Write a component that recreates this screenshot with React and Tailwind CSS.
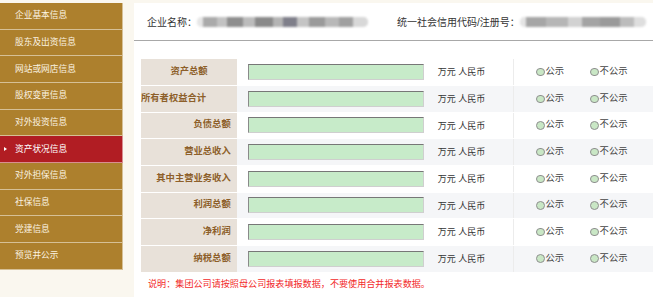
const navItems = [
  '企业基本信息',
  '股东及出资信息',
  '网站或网店信息',
  '股权变更信息',
  '对外投资信息',
  '资产状况信息',
  '对外担保信息',
  '社保信息',
  '党建信息',
  '预览并公示',
];

const rows = [
  { label: '资产总额', align: 'justify-center' },
  { label: '所有者权益合计', align: 'justify-start' },
  { label: '负债总额', align: 'justify-end pr-[6.3px]' },
  { label: '营业总收入', align: 'justify-end pr-[6.3px]' },
  { label: '其中主营业务收入', align: 'justify-end pr-[6.3px]' },
  { label: '利润总额', align: 'justify-end pr-[6.3px]' },
  { label: '净利润', align: 'justify-end pr-[6.3px]' },
  { label: '纳税总额', align: 'justify-end pr-[6.3px]' },
];

const Blurred = ({ widths }) => (
  <div className="flex items-center h-[10px] rounded-full overflow-hidden blur-[1.2px] bg-[#d4d4d4]">
    {widths.map(([w, c], i) => (
      <span key={i} className="h-full" style={{ width: w, background: c }} />
    ))}
  </div>
);

const Radio = ({ label, className = '' }) => (
  <span className={`flex items-center ${className}`}>
    <span className="shrink-0 w-[8.5px] h-[8.5px] rounded-full border border-[#8f8f8f] bg-[#c9e7c5] mr-[1px]" />
    <span>{label}</span>
  </span>
);

const App = () => {
  return (
    <div className="w-[653px] h-[297px] bg-[#faf7ef] flex pt-[3px] overflow-hidden font-['Liberation_Sans','Noto_Sans_CJK_SC',sans-serif]">
      <nav className="w-[123px] shrink-0 flex flex-col self-start">
        {navItems.map((item, i) => {
          const active = i === 5;
          return (
            <div
              key={item}
              className={`relative h-[26.67px] flex items-center pl-[15px] text-[8.7px] border-b border-r border-white/50 ${
                active ? 'bg-[#b11d23] text-white' : 'bg-[#ad802d] text-[#fbf3e2]'
              }`}
            >
              {active && (
                <span className="absolute left-[4px] top-1/2 -translate-y-1/2 w-0 h-0 border-y-[2.5px] border-y-transparent border-l-[3.5px] border-l-white" />
              )}
              {item}
            </div>
          );
        })}
      </nav>

      <main className="ml-[11px] flex-1 bg-white flex flex-col">
        <header className="h-[38px] border-b border-[#a8a8a8] flex items-center text-[10px] text-[#333] pt-[1px]">
          <div className="flex items-center pl-[13px]">
            <span>企业名称：</span>
            <div className="w-[171px]">
              <Blurred
                widths={[
                  [6, '#e6e6e6'], [14, '#aaaaaa'], [10, '#c2c2c2'], [16, '#8e8e8e'], [12, '#bcbcbc'],
                  [18, '#8a8a8a'], [10, '#b4b4b4'], [14, '#7f7f8a'], [12, '#c4c4c4'], [16, '#9a9a9a'],
                  [14, '#b8b8b8'], [14, '#a0a0a0'], [15, '#d8d8d8'],
                ]}
              />
            </div>
          </div>
          <div className="flex items-center ml-[29px]">
            <span>统一社会信用代码/注册号：</span>
            <div className="w-[126px]">
              <Blurred
                widths={[
                  [6, '#e4e4e4'], [20, '#a6a6a6'], [22, '#b6b6b6'], [14, '#d2d2d2'], [18, '#a4a4a4'],
                  [20, '#9a9a9a'], [14, '#bcbcbc'], [12, '#dedede'],
                ]}
              />
            </div>
          </div>
        </header>

        <div className="mt-[18.3px] ml-[7px] flex flex-col">
          {rows.map((row, i) => (
            <div
              key={row.label}
              className={`h-[26.67px] flex border-b border-white ${i % 2 === 1 ? 'bg-[#f5f6f8]' : 'bg-white'}`}
            >
              <div
                className={`w-[96px] shrink-0 bg-[#e8e1d9] flex items-center text-[9.3px] font-bold text-[#8d5f2a] whitespace-nowrap ${row.align}`}
              >
                {row.label}
              </div>
              <div className="w-[193px] shrink-0 flex items-center pl-[10.7px]">
                <div className="w-[176px] h-[16px] bg-[#c7ebc9] border border-t-[#777] border-l-[#8a8a8a] border-r-[#cfcfcf] border-b-[#cfcfcf]" />
              </div>
              <div className="w-[83px] shrink-0 flex items-center pl-[7.7px] pt-[2px] text-[9px] text-[#333] whitespace-nowrap">
                万元 人民币
              </div>
              <div className="flex-1 flex items-center border-l border-[#ececec] pl-[22px] text-[9.3px] text-[#444] whitespace-nowrap">
                <Radio label="公示" />
                <Radio label="不公示" className="ml-[26px]" />
              </div>
            </div>
          ))}
        </div>

        <p className="mt-[5px] pl-[14px] text-[9.1px] leading-[12px] text-[#f22a2a]">
          说明：集团公司请按照母公司报表填报数据，不要使用合并报表数据。
        </p>
      </main>
    </div>
  );
};

export default App;
